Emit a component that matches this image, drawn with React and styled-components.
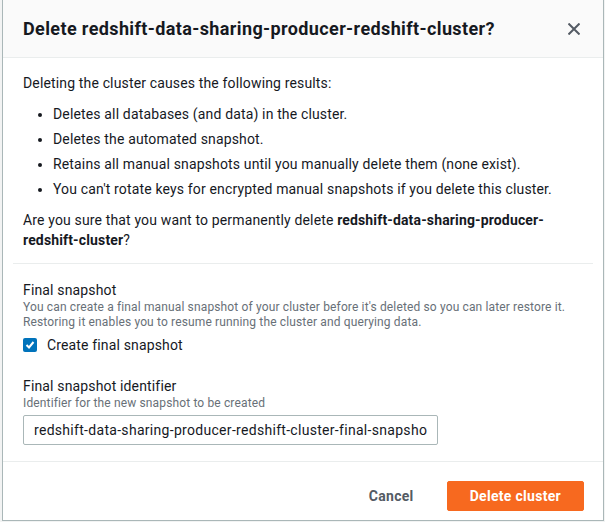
import React from "react";
import styled, { createGlobalStyle } from "styled-components";

const GlobalStyle = createGlobalStyle`
  html, body {
    margin: 0;
    padding: 0;
    background: #f2f3f3;
  }
  body {
    font-family: Roboto, "Liberation Sans", sans-serif;
    color: #16191f;
    letter-spacing: 0.15px;
  }
`;

const Modal = styled.div`
  box-sizing: border-box;
  width: 602px;
  height: 521px;
  margin-left: 2px;
  background: #ffffff;
  border: 1px solid #aab7b8;
  border-top: none;
  display: flex;
  flex-direction: column;
`;

const Header = styled.div`
  height: 58px;
  box-sizing: border-box;
  display: flex;
  align-items: center;
  justify-content: space-between;
  padding: 0 20px;
  background: #fafafa;
  border-bottom: 1px solid #eaeded;
`;

const Title = styled.h2`
  margin: 0;
  font-size: 18px;
  font-weight: 700;
  line-height: 22px;
  letter-spacing: 0.38px;
  color: #16191f;
`;

const CloseButton = styled.button`
  border: none;
  background: none;
  padding: 0;
  margin-right: 3px;
  display: flex;
  cursor: pointer;
`;

const Body = styled.div`
  flex: 1;
  padding: 15px 0 0;
`;

const Section = styled.div`
  padding: 0 20px;
`;

const Text = styled.p`
  margin: 0;
  font-size: 14px;
  line-height: 20px;
`;

const List = styled.ul`
  margin: 11px 0 11px;
  padding-left: 30px;
  font-size: 14px;
  line-height: 20px;
  li + li {
    margin-top: 5px;
  }
`;

const Divider = styled.hr`
  border: none;
  border-top: 1px solid #eaeded;
  margin: 13px 10px 16px;
`;

const Field = styled.div`
  display: flex;
  flex-direction: column;
  margin-top: ${(p) => p.$gap || "0"};
`;

const Label = styled.div`
  font-size: 14px;
  line-height: 20px;
`;

const Hint = styled.div`
  font-size: 12px;
  line-height: 15px;
  letter-spacing: 0.14px;
  color: #687078;
`;

const CheckRow = styled.label`
  display: flex;
  align-items: center;
  gap: 10px;
  margin-top: 5px;
  font-size: 14px;
  line-height: 20px;
`;

const CheckBox = styled.span`
  width: 14px;
  height: 14px;
  border-radius: 2px;
  background: #0073bb;
  display: flex;
  align-items: center;
  justify-content: center;
`;

const Input = styled.input`
  box-sizing: border-box;
  width: 415px;
  height: 30px;
  margin-top: 4px;
  padding: 0 10px;
  border: 1px solid #aab7b8;
  border-radius: 2px;
  font-family: Roboto, "Liberation Sans", sans-serif;
  font-size: 14px;
  letter-spacing: 0.3px;
  color: #16191f;
  background: #fff;
  outline: none;
`;

const Footer = styled.div`
  height: 59px;
  box-sizing: border-box;
  display: flex;
  justify-content: flex-end;
  align-items: flex-start;
  gap: 12px;
  padding: 19px 19px 0;
  border-top: 1px solid #eaeded;
`;

const Button = styled.button`
  height: 30px;
  padding: 0 ${(p) => (p.$primary ? "22px" : "20px")};
  border-radius: 2px;
  border: 1px solid ${(p) => (p.$primary ? "#f7691f" : "transparent")};
  background: ${(p) => (p.$primary ? "#f7691f" : "transparent")};
  color: ${(p) => (p.$primary ? "#ffffff" : "#545b64")};
  font-family: Roboto, "Liberation Sans", sans-serif;
  font-size: 14px;
  font-weight: 700;
  letter-spacing: 0.3px;
  cursor: pointer;
`;

export default function App() {
  return (
    <>
      <GlobalStyle />
      <Modal>
        <Header>
          <Title>Delete redshift-data-sharing-producer-redshift-cluster?</Title>
          <CloseButton aria-label="Close">
            <svg width="12" height="12" viewBox="0 0 12 12">
              <path d="M0.5 0.5 L11.5 11.5 M11.5 0.5 L0.5 11.5" stroke="#545b64" strokeWidth="2" />
            </svg>
          </CloseButton>
        </Header>
        <Body>
          <Section>
            <Text>Deleting the cluster causes the following results:</Text>
            <List>
              <li>Deletes all databases (and data) in the cluster.</li>
              <li>Deletes the automated snapshot.</li>
              <li>Retains all manual snapshots until you manually delete them (none exist).</li>
              <li>You can't rotate keys for encrypted manual snapshots if you delete this cluster.</li>
            </List>
            <Text>
              Are you sure that you want to permanently delete{" "}
              <b>redshift-data-sharing-producer-redshift-cluster</b>?
            </Text>
          </Section>
          <Divider />
          <Section>
            <Field>
              <Label>Final snapshot</Label>
              <Hint>
                You can create a final manual snapshot of your cluster before it's deleted so you can later restore it.
                <br />
                Restoring it enables you to resume running the cluster and querying data.
              </Hint>
              <CheckRow>
                <CheckBox>
                  <svg width="10" height="10" viewBox="0 0 10 10">
                    <path d="M1.5 5 L4 7.5 L8.5 2" fill="none" stroke="#fff" strokeWidth="2" />
                  </svg>
                </CheckBox>
                Create final snapshot
              </CheckRow>
            </Field>
            <Field $gap="21px">
              <Label>Final snapshot identifier</Label>
              <Hint>Identifier for the new snapshot to be created</Hint>
              <Input
                readOnly
                value="redshift-data-sharing-producer-redshift-cluster-final-snapshot"
              />
            </Field>
          </Section>
        </Body>
        <Footer>
          <Button>Cancel</Button>
          <Button $primary>Delete cluster</Button>
        </Footer>
      </Modal>
    </>
  );
}
